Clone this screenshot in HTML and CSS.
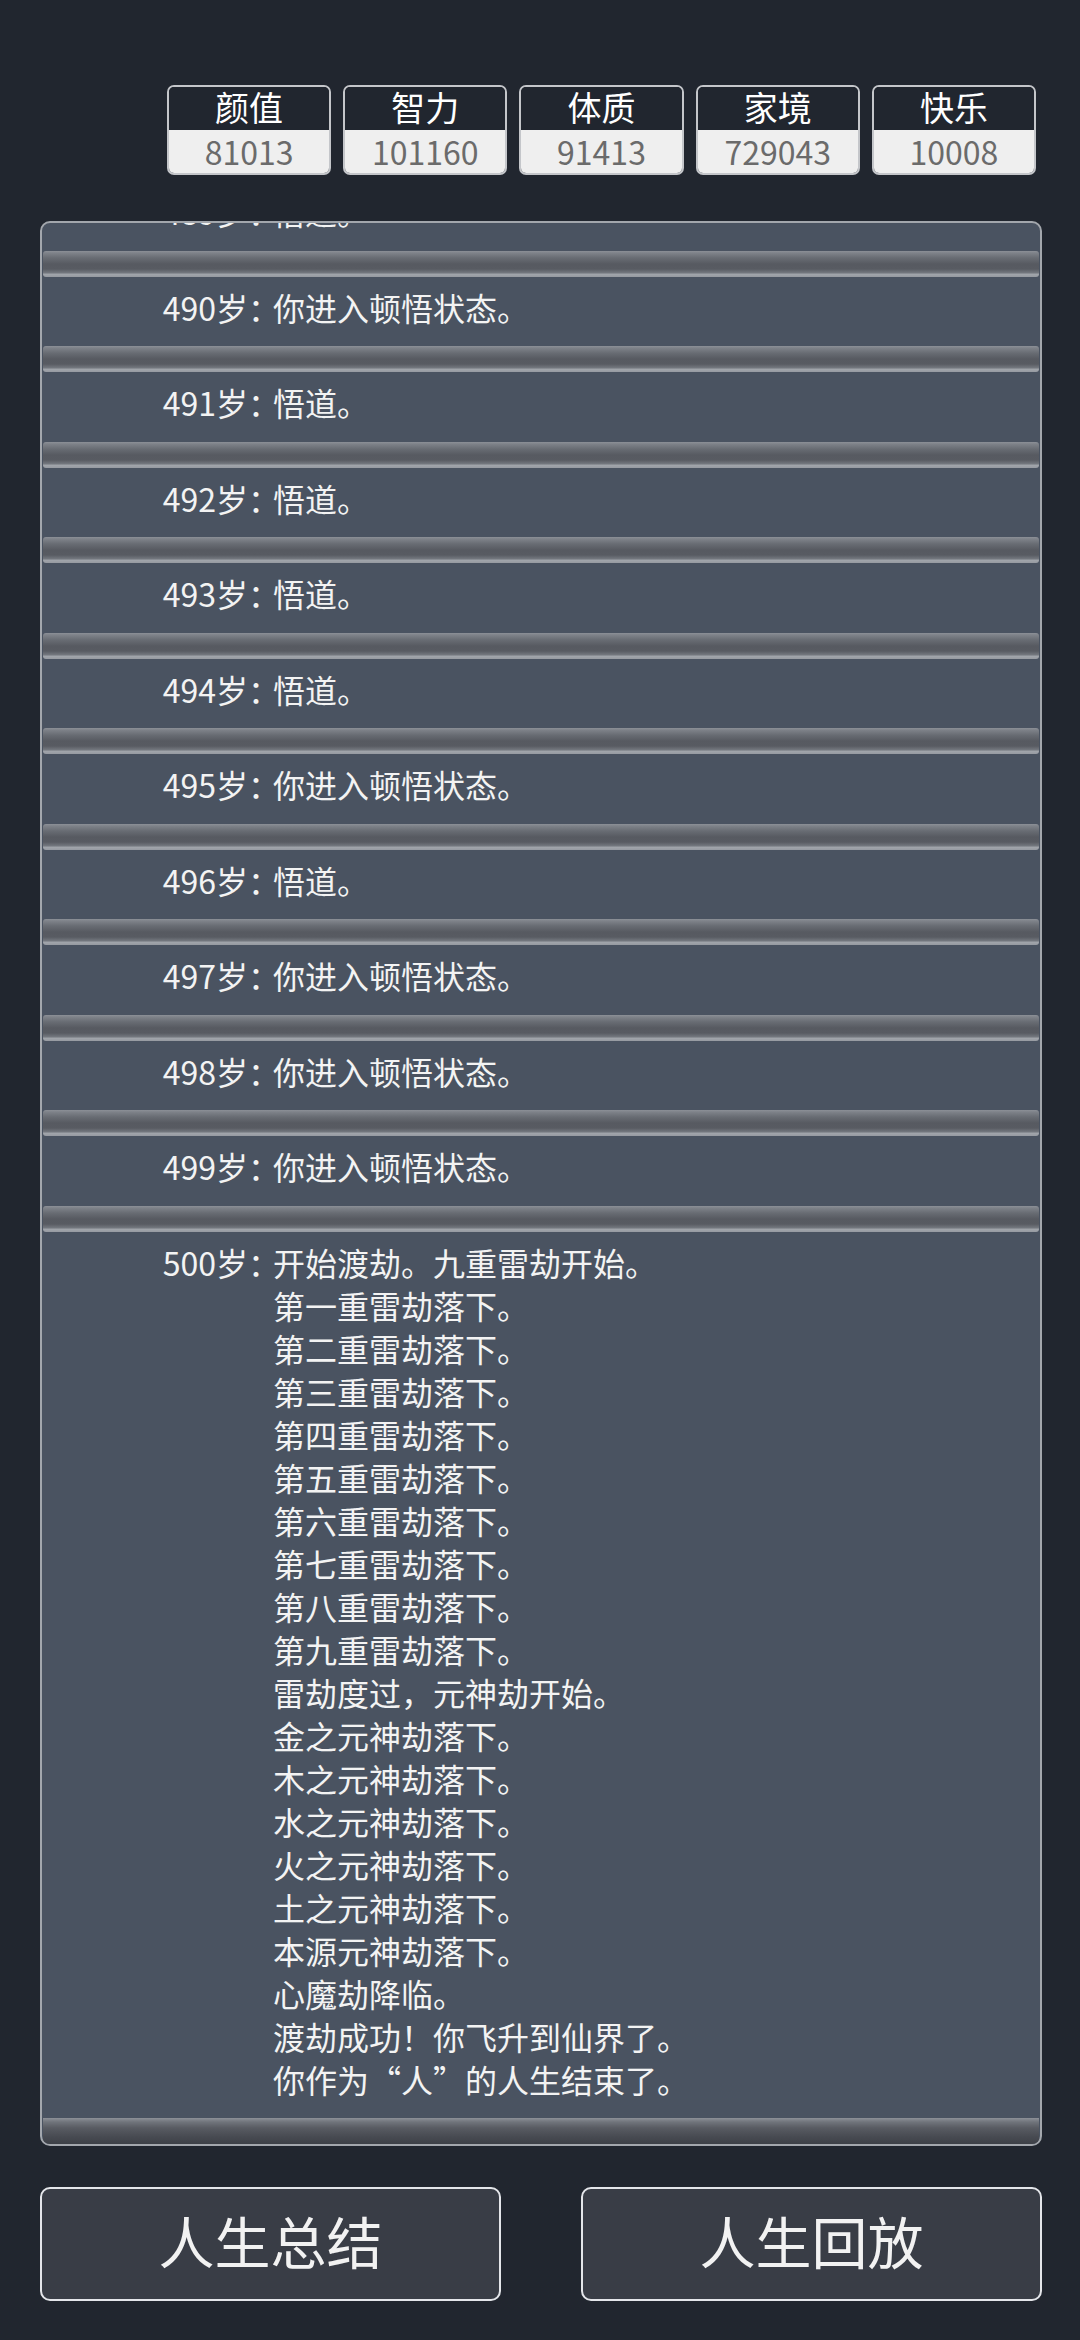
FILE: index.html
```html
<!DOCTYPE html>
<html lang="zh-CN">
<head>
<meta charset="utf-8">
<title>人生重开模拟器</title>
<link rel="stylesheet" href="styles.css">
</head>
<body>
<div class="page">
  <div class="stats">
    <div class="stat"><div class="stat-label">颜值</div><div class="stat-value">81013</div></div>
    <div class="stat"><div class="stat-label">智力</div><div class="stat-value">101160</div></div>
    <div class="stat"><div class="stat-label">体质</div><div class="stat-value">91413</div></div>
    <div class="stat"><div class="stat-label">家境</div><div class="stat-value">729043</div></div>
    <div class="stat"><div class="stat-label">快乐</div><div class="stat-value">10008</div></div>
  </div>

  <div class="log">
    <ul class="trajectory">
      <li><div class="entry"><span class="age">489岁：</span><span class="text">悟道。</span></div></li>
      <li><div class="entry"><span class="age">490岁：</span><span class="text">你进入顿悟状态。</span></div></li>
      <li><div class="entry"><span class="age">491岁：</span><span class="text">悟道。</span></div></li>
      <li><div class="entry"><span class="age">492岁：</span><span class="text">悟道。</span></div></li>
      <li><div class="entry"><span class="age">493岁：</span><span class="text">悟道。</span></div></li>
      <li><div class="entry"><span class="age">494岁：</span><span class="text">悟道。</span></div></li>
      <li><div class="entry"><span class="age">495岁：</span><span class="text">你进入顿悟状态。</span></div></li>
      <li><div class="entry"><span class="age">496岁：</span><span class="text">悟道。</span></div></li>
      <li><div class="entry"><span class="age">497岁：</span><span class="text">你进入顿悟状态。</span></div></li>
      <li><div class="entry"><span class="age">498岁：</span><span class="text">你进入顿悟状态。</span></div></li>
      <li><div class="entry"><span class="age">499岁：</span><span class="text">你进入顿悟状态。</span></div></li>
      <li class="last"><div class="entry"><span class="age">500岁：</span><span class="text">开始渡劫。九重雷劫开始。<br>第一重雷劫落下。<br>第二重雷劫落下。<br>第三重雷劫落下。<br>第四重雷劫落下。<br>第五重雷劫落下。<br>第六重雷劫落下。<br>第七重雷劫落下。<br>第八重雷劫落下。<br>第九重雷劫落下。<br>雷劫度过，元神劫开始。<br>金之元神劫落下。<br>木之元神劫落下。<br>水之元神劫落下。<br>火之元神劫落下。<br>土之元神劫落下。<br>本源元神劫落下。<br>心魔劫降临。<br>渡劫成功！你飞升到仙界了。<br>你作为“人”的人生结束了。</span></div></li>
    </ul>
  </div>

  <div class="actions">
    <button class="btn">人生总结</button>
    <button class="btn">人生回放</button>
  </div>
</div>
</body>
</html>
```

FILE: styles.css
```css
html, body {
  margin: 0;
  padding: 0;
  background: #21262f;
}

body {
  font-family: "Noto Sans CJK SC", "Noto Sans", sans-serif;
  color: #f2f2f2;
}

.page {
  width: 1080px;
  height: 2340px;
  display: flex;
  flex-direction: column;
}

.stats {
  display: flex;
  gap: 12px;
  padding: 85px 44px 0 167px;
}

.stat {
  width: 164.5px;
  height: 90px;
  box-sizing: border-box;
  border: 2px solid #c4c6ca;
  border-radius: 7px;
  display: flex;
  flex-direction: column;
  text-align: center;
}

.stat-label {
  height: 43px;
  box-sizing: border-box;
  padding-bottom: 3px;
  line-height: 40px;
  font-size: 34px;
  color: #ffffff;
  background: #21262f;
  border-radius: 5px 5px 0 0;
}

.stat-value {
  height: 43px;
  line-height: 43px;
  font-size: 32px;
  color: #6b6b6b;
  background: #efefef;
  border-radius: 0 0 5px 5px;
}

.log {
  margin: 46px 38px 0 40px;
  height: 1925px;
  box-sizing: border-box;
  border: 2px solid #a3a7ad;
  border-radius: 10px;
  background: #4a5361;
  overflow: hidden;
}

.trajectory {
  list-style: none;
  margin: -42px 0 0 0;
  padding: 0;
}

.trajectory li {
  display: block;
}

.trajectory li::after {
  content: "";
  display: block;
  height: 26px;
  margin: 0 1px;
  border-radius: 3px;
  background: linear-gradient(to bottom,
    #8c9097 0px,
    #7e8289 2px,
    #686c73 7px,
    #575a61 13px,
    #585b62 18px,
    #71757c 21.5px,
    #a0a4aa 23.5px,
    #969aa1 26px);
}

.trajectory li.last::after {
  height: 28px;
  border-radius: 0;
  background: linear-gradient(to bottom,
    #8d9198 0px,
    #70747b 4px,
    #585b62 10px,
    #474a51 19px,
    #3b3e45 28px);
}

.entry {
  display: flex;
  padding: 9px 0 17.5px 0;
  font-size: 32px;
  line-height: 43px;
  color: #f3f3f3;
}

.age {
  flex: 0 0 238px;
  margin-right: -7px;
  text-align: right;
  white-space: nowrap;
}

.text {
  flex: 1;
}

.actions {
  display: flex;
  justify-content: space-between;
  margin: 41px 38px 0 40px;
}

.btn {
  width: 461px;
  height: 114px;
  box-sizing: border-box;
  background: #393d46;
  border: 2px solid #e4e6ea;
  border-radius: 10px;
  color: #f2f2f2;
  font-family: "Noto Sans CJK SC", "Noto Sans", sans-serif;
  font-size: 56px;
  line-height: 1;
  padding: 0 0 8px 0;
}
```
